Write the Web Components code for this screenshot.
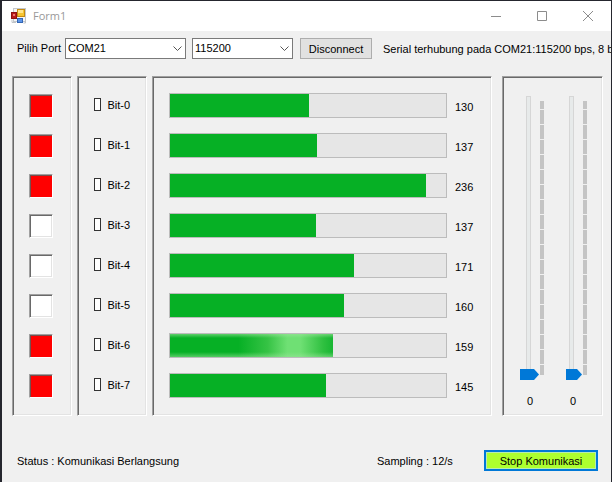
<!DOCTYPE html>
<html lang="id">
<head>
<meta charset="utf-8">
<title>Form1</title>
<style>
html, body { margin: 0; height: 100%; }
body { background: #25262e; font: 11px/14px "Liberation Sans", Arial, sans-serif; color: #000; }
</style>
</head>
<body>
<serial-form></serial-form>
<script>
function define(name, html, init) {
  const template = document.createElement("template");
  template.innerHTML = "<style>*{box-sizing:border-box}</style>" + html;
  customElements.define(name, class extends HTMLElement {
    constructor() {
      super();
      this.attachShadow({ mode: "open" }).append(template.content.cloneNode(true));
    }
    connectedCallback() { if (init) init(this, this.shadowRoot); }
  });
}

define("title-bar", `
<style>
:host { display: flex; align-items: center; height: 30px; padding-left: 9px; background: #fff; color: #999; font: 12px/16px "Open Sans", "Noto Sans", sans-serif; }
.name { flex: 1; margin-left: 6px; font-size: 11px; }
button { display: grid; place-items: center; width: 46px; height: 30px; padding: 0; border: 0; background: none; color: #8c8c8c; }
svg { display: block; }
</style>
<svg width="16" height="16" viewBox="0 0 16 16" aria-hidden="true">
  <rect x="2.5" y=".5" width="12" height="13" fill="#f5f5f5" stroke="#c4c8cc"/>
  <rect x=".5" y="4.500" width="5" height="6" fill="#b71c1c" stroke="#8f1111"/>
  <rect x="2" y="6" width="2" height="2" fill="#ee7770"/>
  <rect x="6.5" y="1.500" width="7" height="7" fill="#f6c531" stroke="#c48a12"/>
  <rect x="7" y="2" width="5" height="3" fill="#ffe48b"/>
  <rect x="6.500" y="10.500" width="5" height="4" fill="#5b94e8" stroke="#3366b4"/>
  <path d="M1 11.500v3h4M14.500 10v5h-2" fill="none" stroke="#c0c4c8"/>
</svg>
<span class="name"><slot></slot></span>
<button aria-label="Minimize"><svg width="10" height="10"><path d="M0 5.500h10" stroke="currentColor"/></svg></button>
<button aria-label="Maximize"><svg width="10" height="10"><path d="M.5.500h9v9h-9z" fill="none" stroke="currentColor"/></svg></button>
<button aria-label="Close"><svg width="10" height="10"><path d="M0 0l10 10M10 0L0 10" stroke="currentColor"/></svg></button>`);

define("combo-box", `
<style>
:host { display: block; position: relative; height: 21px; }
select { appearance: none; display: block; width: 100%; height: 100%; margin: 0; padding: 0 20px 1px 2px; border: 1px solid #7a7a7a; border-radius: 0; background: #fff; color: #000; font: inherit; }
svg { position: absolute; right: 4px; top: 8px; pointer-events: none; }
</style>
<select><option></option></select>
<svg width="9" height="6" aria-hidden="true"><path d="M.5.500l4 4 4-4" fill="none" stroke="#555"/></svg>`,
(host, root) => {
  root.querySelector("option").textContent = host.getAttribute("value");
  root.querySelector("select").setAttribute("aria-label", host.getAttribute("label"));
});

define("push-button", `
<style>
:host { display: block; height: 21px; }
button { display: block; width: 100%; height: 100%; padding: 0; border: 1px solid #adadad; background: #e1e1e1; color: #000; font: inherit; white-space: nowrap; }
:host([primary]) button { border: 2px solid #0078d7; background: #adff2f; box-shadow: inset 0 0 0 1px #b8ecb0; }
</style>
<button><slot></slot></button>`);

define("sunken-panel", `
<style>
:host { display: flex; flex-direction: column; border: 1px solid; border-color: #a0a0a0 #fff #fff #a0a0a0; box-shadow: inset 1px 1px #696969, inset -1px -1px #e3e3e3; padding: 16px; }
</style>
<slot></slot>`);

define("bit-lamp", `
<style>
:host { display: flex; align-items: center; height: 25px; margin-bottom: 15px; }
i { width: 24px; height: 24px; background: #fff; border: 1px solid; border-color: #a0a0a0 #fff #fff #a0a0a0; box-shadow: inset 1px 1px #696969, inset -1px -1px #e3e3e3; }
:host([on]) i { background: red; box-shadow: inset 1px 1px #76504f; }
</style>
<i></i>`);

define("bit-check", `
<style>
:host { display: block; height: 25px; margin-bottom: 15px; }
label { display: flex; align-items: center; gap: 6px; height: 23px; white-space: nowrap; }
input { appearance: none; width: 13px; height: 13px; margin: 0; border: 1px solid #333; background: #fff; }
</style>
<label><input type="checkbox"><slot></slot></label>`);

define("value-bar", `
<style>
:host { display: grid; grid-template-columns: minmax(0, 1fr) 20px; gap: 8px; align-items: center; height: 25px; margin-bottom: 15px; }
progress { appearance: none; display: block; width: 100%; height: 25px; border: 1px solid #bcbcbc; background: #e6e6e6; }
progress::-webkit-progress-bar { background: #e6e6e6; }
progress::-webkit-progress-value { background: #06b025; }
:host([shine]) progress::-webkit-progress-value { background:
  linear-gradient(#9be59b99, transparent 4px, transparent 18px, #9be59b88) , linear-gradient(90deg, #06b025 42%, #36c345 60%, #6fe074 72%, #6fe074 80%, #2fc040 94%, #18b632); }
output { padding-top: 3px; }
</style>
<progress max="283"></progress><output><slot></slot></output>`,
(host, root) => {
  const bar = root.querySelector("progress");
  bar.value = host.getAttribute("level");
  bar.setAttribute("aria-label", host.getAttribute("label"));
});

define("track-slider", `
<style>
:host { display: grid; grid-template-columns: 20px 4px; justify-content: start; }
input { appearance: none; writing-mode: vertical-lr; direction: rtl; width: 20px; height: 284px; margin: 0; background: linear-gradient(#e7eaea, #e7eaea) 7px 1px / 3px 276px no-repeat, linear-gradient(#d6d6d6, #d6d6d6) 6px 0 / 5px 278px no-repeat; }
input::-webkit-slider-runnable-track { width: 20px; height: 100%; }
input::-webkit-slider-thumb { appearance: none; width: 19px; height: 11px; background: #0078d7; clip-path: polygon(0 0, 14px 0, 100% 50%, 14px 100%, 0 100%); }
:host([short]) input::-webkit-slider-thumb { width: 16px; margin-left: 3px; clip-path: polygon(0 0, 11px 0, 100% 50%, 11px 100%, 0 100%); }
.ticks { margin-top: 5px; height: 274px; background: repeating-linear-gradient(#c4c4c4 0 14px, #f0f0f0 14px 15px); background-position: 0 -6px; }
output { text-align: center; margin-top: 7px; }
</style>
<input type="range" min="0" max="255" value="0"><div class="ticks"></div><output><slot></slot></output>`,
(host, root) => root.querySelector("input").setAttribute("aria-label", host.getAttribute("label")));

const levels = [[130, 143, 1], [137, 151, 1], [236, 262, 1], [137, 150, 0], [171, 189, 0], [160, 178, 0], [159, 167, 1], [145, 160, 1]];

define("serial-form", `
<style>
:host { display: flex; flex-direction: column; min-height: 100vh; padding: 1px 1px 2px 2px; overflow: hidden; }
main { flex: 1; display: flex; flex-direction: column; padding: 6px 0 12px 10px; background: #f0f0f0; overflow: hidden; }
.top { display: grid; grid-template-columns: 42px 121px 101px 73px minmax(0, 1fr); column-gap: 6px; padding-left: 5px; white-space: nowrap; align-items: center; height: 22px; }
.top push-button { margin: 1px 0 0 1px; }
.top p { overflow: hidden; margin-left: 5px; padding-top: 2px; }
p { margin: 0; }
.panels { display: grid; grid-template-columns: 60px 70px minmax(0, 1fr) 101px; gap: 5px; margin: 17px 8px 0 0; }
.lamps { padding-bottom: 2px; }
.bars { margin-right: 5px; }
.sliders { flex-direction: row; gap: 19px; padding: 19px 0 0 17px; }
footer { display: grid; grid-template-columns: minmax(0, 1fr) 107px 114px; align-items: center; margin-top: auto; padding: 0 13px 0 5px; white-space: nowrap; }
</style>
<title-bar>Form1</title-bar>
<main>
  <div class="top">
    <span>Pilih Port</span>
    <combo-box label="Pilih Port" value="COM21"></combo-box>
    <combo-box label="Baud rate" value="115200"></combo-box>
    <push-button>Disconnect</push-button>
    <p>Serial terhubung pada COM21:115200 bps, 8 bit</p>
  </div>
  <div class="panels">
    <sunken-panel class="lamps">${levels.map(l => `<bit-lamp${l[2] ? " on" : ""}></bit-lamp>`).join("")}</sunken-panel>
    <sunken-panel class="lamps">${levels.map((l, i) => `<bit-check>Bit-${i}</bit-check>`).join("")}</sunken-panel>
    <sunken-panel class="lamps bars">${levels.map((l, i) => `<value-bar label="Bit-${i}" level="${l[1]}"${i === 6 ? " shine" : ""}>${l[0]}</value-bar>`).join("")}</sunken-panel>
    <sunken-panel class="sliders"><track-slider label="Slider 1">0</track-slider><track-slider label="Slider 2" short>0</track-slider></sunken-panel>
  </div>
  <footer>
    <p>Status : Komunikasi Berlangsung</p>
    <p>Sampling : 12/s</p>
    <push-button primary>Stop Komunikasi</push-button>
  </footer>
</main>`);
</script>
</body>
</html>
